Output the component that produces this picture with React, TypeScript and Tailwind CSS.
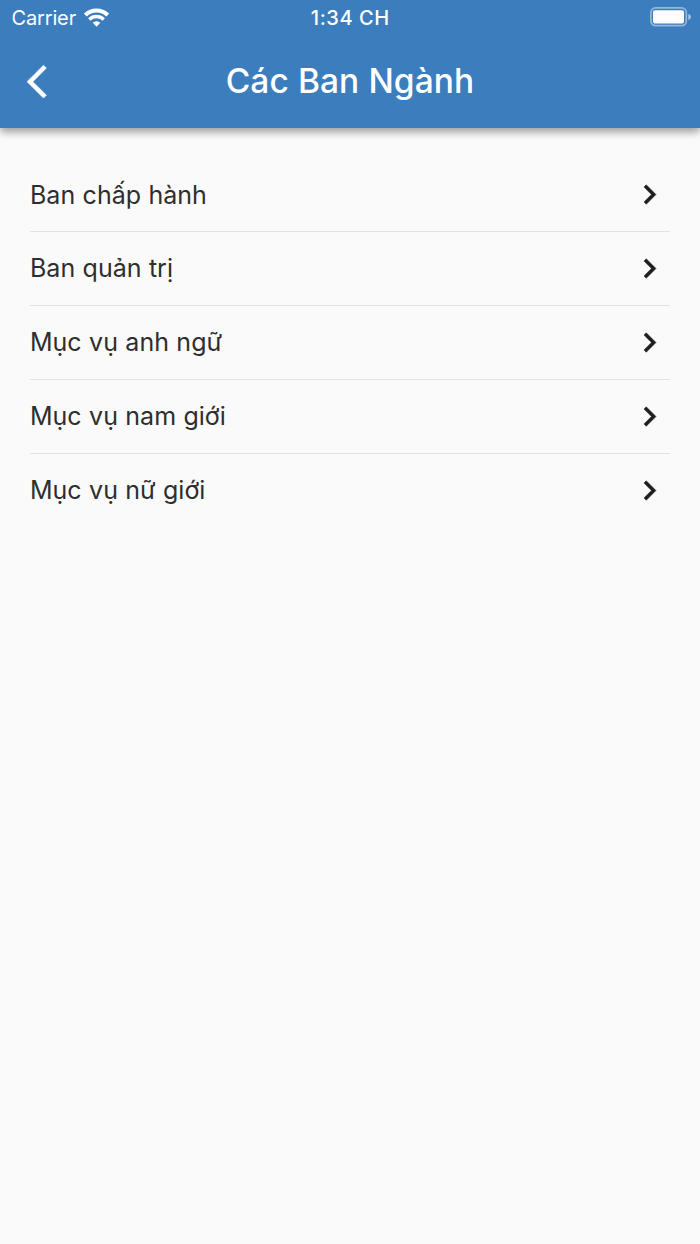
const items = [
  "Ban chấp hành",
  "Ban quản trị",
  "Mục vụ anh ngữ",
  "Mục vụ nam giới",
  "Mục vụ nữ giới",
];

const WifiIcon = () => (
  <svg viewBox="0 0 25 19" className="mb-0.5 h-[19px] w-[25px]" fill="none">
    <path d="M1.3 7.1a16 16 0 0 1 22.4 0" stroke="white" strokeWidth="4" />
    <path d="M5.3 11.4a10.4 10.4 0 0 1 14.4 0" stroke="white" strokeWidth="3.4" />
    <path d="M8.7 14.8a5.4 5.4 0 0 1 7.6 0L12.5 18.7z" fill="white" />
  </svg>
);

const BatteryIcon = () => (
  <svg viewBox="0 0 42 20" className="mb-0.5 h-5 w-[42px]" fill="none">
    <rect x="0.9" y="0.9" width="35.4" height="17.8" rx="4.6" stroke="white" strokeOpacity="0.45" strokeWidth="1.7" />
    <rect x="3" y="3.2" width="31" height="13.2" rx="2" fill="white" />
    <path d="M38.4 7.1c1.5.5 2.4 1.5 2.4 2.9s-.9 2.4-2.4 2.9z" fill="white" fillOpacity="0.6" />
  </svg>
);

const StatusBar = () => (
  <div className="grid h-9 grid-cols-[1fr_100px_1fr] items-center pr-2 pl-[11.5px] text-[20px] leading-9">
    <div className="flex items-center gap-2">
      <span className="tracking-[-0.15px]">Carrier</span>
      <WifiIcon />
    </div>
    <span className="-ml-[3px] text-center font-medium tracking-[0.55px]">1:34 CH</span>
    <div className="flex justify-end">
      <BatteryIcon />
    </div>
  </div>
);

const Header = () => (
  <header className="h-[128.4px] bg-[#3c7dbe] text-white shadow-[0_4px_8px_rgba(0,0,0,0.38)]">
    <StatusBar />
    <div className="grid h-[91px] grid-cols-[80px_1fr_80px] items-center">
      <button className="pl-[27px]" aria-label="Back">
        <svg viewBox="0 2 12 20" className="h-[33.3px] w-5" fill="currentColor" stroke="currentColor" strokeWidth="0.3">
          <path d="M11.67 3.87L9.9 2.1 0 12l9.9 9.9 1.77-1.77L3.54 12z" />
        </svg>
      </button>
      <h1 className="text-center text-[33.5px] font-medium tracking-[0.1px]">Các Ban Ngành</h1>
    </div>
  </header>
);

export default function App() {
  return (
    <div className="min-h-[1244px] bg-[#fafafa] font-['Inter',sans-serif]">
      <Header />
      <ul className="px-[30px] pt-[30px]">
        {items.map((item) => (
          <li
            key={item}
            className="flex h-[73.8px] items-center justify-between border-b border-[#e1e2e6] text-[25px] [word-spacing:0.4px] text-[#2e2e2e] last:border-0"
          >
            <span className="pt-px">{item}</span>
            <svg
              viewBox="0 0 24 24"
              className="mr-px size-[39px] text-[#1f1f1f]"
              fill="currentColor"
              stroke="currentColor"
              strokeWidth="0.3"
            >
              <path d="M10 6L8.59 7.41 13.17 12l-4.58 4.59L10 18l6-6z" />
            </svg>
          </li>
        ))}
      </ul>
    </div>
  );
}
